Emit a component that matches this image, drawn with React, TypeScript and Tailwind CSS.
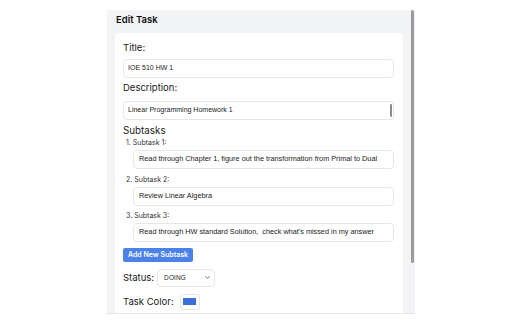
import React from 'react';

// Subtasks shown in the edit form
const SUBTASKS: string[] = [
  'Read through Chapter 1, figure out the transformation from Primal to Dual',
  'Review Linear Algebra',
  "Read through HW standard Solution,  check what's missed in my answer",
];

const labelFont = { fontFamily: 'Inter, "Noto Sans", sans-serif' };
const fieldFont = { fontFamily: '"Liberation Sans", Arial, sans-serif' };

export default function App() {
  return (
    <div className="min-h-screen bg-white pt-[10px] pl-[107px]" style={labelFont}>
      <div className="relative w-[308px] h-[304px] bg-[#f2f3f5] overflow-hidden border-b border-[#ebe6e6]">
        {/* header */}
        <h2 className="pl-[9px] pt-[3px] h-[23px] text-[9.5px] leading-[14px] font-semibold text-[#111]">Edit Task</h2>

        {/* form card */}
        <div className="ml-[8px] w-[288px] bg-white rounded-[4px] pl-[8px] pr-[9px] pt-[8px] pb-6 text-[#1a1a1a]">
          <label className="block text-[9.5px] leading-[14px]">Title:</label>
          <div
            className="mt-[4px] h-[19px] flex items-center px-[4px] border border-[#e6e7ea] rounded-[4px] text-[7px] text-[#222]"
            style={fieldFont}
          >
            IOE 510 HW 1
          </div>

          <label className="block mt-[3px] text-[9.5px] leading-[14px]">Description:</label>
          <div
            className="relative mt-[6px] h-[19px] flex items-center px-[4px] border border-[#e6e7ea] rounded-[4px] text-[7px] text-[#222]"
            style={fieldFont}
          >
            Linear Programming Homework 1
            <div className="absolute right-[1px] top-[2px] w-[2.5px] h-[13px] rounded-full bg-[#8c8c8c]" />
          </div>

          <div className="mt-[4px] text-[9.8px] leading-[14px]">Subtasks</div>
          <div>
            {SUBTASKS.map((text, i) => (
              <div key={i} className="mb-[5.5px]">
                <div className="ml-[3px] text-[7px] leading-[10px] text-[#333]">
                  {i + 1}. Subtask {i + 1}:
                </div>
                <div
                  className="ml-[10px] mt-[2px] h-[19px] flex items-center px-[5px] border border-[#e6e7ea] rounded-[4px] text-[7.3px] text-[#222] whitespace-pre"
                  style={fieldFont}
                >
                  {text}
                </div>
              </div>
            ))}
          </div>

          <button className="block mt-[1.5px] h-[14px] w-[70px] rounded-[2px] bg-[#4a82ea] text-white text-[7px] font-semibold leading-[14px] text-center">
            Add New Subtask
          </button>

          <div className="mt-[7px] flex items-center gap-[3px]">
            <span className="text-[9.5px] leading-[14px]">Status:</span>
            <div className="w-[58px] h-[18px] flex items-center justify-between pl-[6px] pr-[3px] border border-[#e6e7ea] rounded-[4px] bg-white">
              <span className="text-[6.5px] tracking-[0.02em] text-[#222]" style={fieldFont}>DOING</span>
              <svg width="7" height="7" viewBox="0 0 24 24" fill="none" stroke="#555" strokeWidth="3" strokeLinecap="round" strokeLinejoin="round">
                <path d="m6 9 6 6 6-6" />
              </svg>
            </div>
          </div>

          <div className="mt-[7px] flex items-center gap-[6px]">
            <span className="text-[9.5px] leading-[14px]">Task Color:</span>
            <div className="w-[20px] h-[16px] flex items-center justify-center border border-[#e6e7ea] rounded-[3px] bg-white">
              <div className="w-[13px] h-[7px] bg-[#3b6fd8]" />
            </div>
          </div>
        </div>

        {/* panel scrollbar */}
        <div className="absolute right-[1px] top-0 w-[3px] h-[253px] rounded-full bg-[#9b9b9b]" />
      </div>
    </div>
  );
}
